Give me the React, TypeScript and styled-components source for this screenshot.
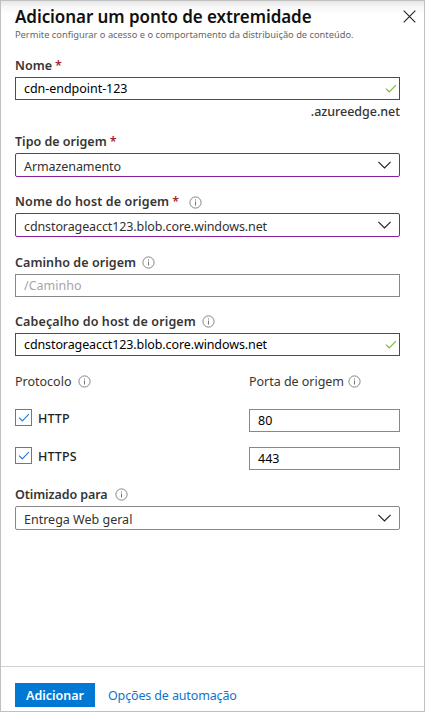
import React from 'react';
import styled, { createGlobalStyle } from 'styled-components';

const GlobalStyle = createGlobalStyle`
  * { box-sizing: border-box; }
  body { margin: 0; background: #fff; }
`;

const Panel = styled.main`
  display: flex;
  flex-direction: column;
  width: 425px;
  height: 712px;
  border: 1px solid #c0c0c0;
  background: linear-gradient(#e6e6e6, #f7f7f7 6px, #fff 13px);
  color: #363534;
  font-family: 'Noto Sans', 'Segoe UI', sans-serif;
  font-size: 12.5px;
  line-height: 20px;
`;

const Header = styled.header`
  display: flex;
  justify-content: space-between;
  height: 54px;
  padding: 4px 8px 0 14px;
`;

const Title = styled.h1`
  margin: 0;
  font-size: 17px;
  font-weight: 600;
  line-height: 24px;
  letter-spacing: -0.075px;
  color: #111;
  white-space: nowrap;
`;

const Subtitle = styled.p`
  margin: 0;
  font-size: 9.3px;
  line-height: 12px;
  color: #666;
  white-space: nowrap;
`;

const CloseButton = styled.button`
  display: flex;
  width: 13px;
  height: 13px;
  margin-top: 5px;
  padding: 0;
  border: 0;
  background: none;
`;

const Form = styled.form`
  display: flex;
  flex: 1;
  flex-direction: column;
  padding: 0 24px 0 14px;
`;

const Field = styled.div<{ $after: number }>`
  display: flex;
  flex-direction: column;
  gap: 2px;
  margin-bottom: ${(p) => p.$after}px;
`;

const Label = styled.div<{ $tracking?: number; $regular?: boolean }>`
  display: flex;
  align-items: center;
  height: 20px;
  padding-top: 2px;
  font-weight: ${(p) => (p.$regular ? 400 : 600)};
  letter-spacing: ${(p) => p.$tracking ?? 0}px;
  white-space: nowrap;
`;

const Required = styled.span`
  margin-left: 3px;
  color: #a4262c;
  letter-spacing: 0;
`;

const InfoMark = styled.svg<{ $gap?: number; $lift?: number }>`
  flex: none;
  width: 13px;
  height: 13px;
  margin-left: ${(p) => p.$gap ?? 6}px;
  margin-top: ${(p) => -(p.$lift ?? 2)}px;
`;

const Box = styled.div<{ $set?: boolean; $tracking?: number }>`
  display: flex;
  align-items: center;
  justify-content: space-between;
  height: 23px;
  padding: 0 2px 0 8px;
  border: 1px solid ${(p) => (p.$set ? '#881fa3' : '#8a8886')};
  background: #fff;
  color: #000;
  letter-spacing: ${(p) => p.$tracking ?? 0}px;
  white-space: nowrap;
`;

const Select = styled(Box)`
  height: 24px;
  padding: 3px 8px 0 8px;
  border-radius: 2px;
  color: #323130;
`;

const Arrow = styled.svg`
  width: 13px;
  height: 8px;
  margin-top: -3px;
`;

const Placeholder = styled.span`
  color: #a6a6a6;
`;

const Suffix = styled.div`
  align-self: flex-end;
  height: 18px;
  font-weight: 500;
  letter-spacing: -0.03px;
`;

const ProtocolHeads = styled.div`
  display: grid;
  grid-template-columns: 234px 151px;
  margin-bottom: 18px;
`;

const ProtocolRow = styled.div<{ $after: number }>`
  display: grid;
  grid-template-columns: 234px 151px;
  height: 23px;
  margin-bottom: ${(p) => p.$after}px;
`;

const Choice = styled.label`
  display: flex;
  align-items: center;
  align-self: start;
  height: 17px;
  gap: 6px;
  font-weight: 500;
  letter-spacing: 0.1px;
  color: #222;
`;

const Check = styled.span`
  display: flex;
  align-items: center;
  justify-content: center;
  width: 17px;
  height: 17px;
  border: 1px solid #767676;
`;

const ChoiceText = styled.span`
  padding-top: 2px;
`;

const Footer = styled.footer`
  display: flex;
  align-items: flex-start;
  height: 45px;
  padding: 16px 14px 0;
  border-top: 1px solid #d0d0d0;
`;

const Primary = styled.button`
  width: 80px;
  height: 24px;
  padding: 1px 0 0;
  border: 0;
  background: #0078d4;
  color: #fff;
  font: 600 12.5px/23px 'Noto Sans', sans-serif;
`;

const Link = styled.a`
  margin-left: 13px;
  padding-top: 1px;
  color: #0f74cc;
  line-height: 24px;
  letter-spacing: -0.14px;
`;

const Info = ({ gap, lift }: { gap?: number; lift?: number }) => (
  <InfoMark $gap={gap} $lift={lift} viewBox="0 0 13 13" fill="none" stroke="#777">
    <circle cx="6.5" cy="6.5" r="5.6" strokeWidth="0.9" />
    <path d="M6.5 5.5v4M6.5 3.4v1.1" />
  </InfoMark>
);

const Chevron = () => (
  <Arrow viewBox="0 0 13 8" fill="none" stroke="#222" strokeWidth="1.15">
    <path d="M.4 .8 6.5 6.9 12.6 .8" />
  </Arrow>
);

const Tick = ({ color }: { color: string }) => (
  <svg width="12" height="9" viewBox="0 0 12 9" fill="none" stroke={color} strokeWidth="1.2">
    <path d="M1 4.6 4.3 7.8 10.9 1.2" />
  </svg>
);

export default function App() {
  return (
    <>
      <GlobalStyle />
      <Panel>
        <Header>
          <div>
            <Title>Adicionar um ponto de extremidade</Title>
            <Subtitle>Permite configurar o acesso e o comportamento da distribuição de conteúdo.</Subtitle>
          </div>
          <CloseButton aria-label="Fechar">
            <svg width="13" height="13" viewBox="0 0 13 13" stroke="#222" strokeWidth="1.1">
              <path d="M.7.7 12.3 12.3M12.3.7.7 12.3" />
            </svg>
          </CloseButton>
        </Header>
        <Form>
          <Field $after={11}>
            <Label>Nome<Required>*</Required></Label>
            <Box $set $tracking={-0.04}>cdn-endpoint-123<Tick color="#7fba42" /></Box>
            <Suffix>.azureedge.net</Suffix>
          </Field>
          <Field $after={14}>
            <Label>Tipo de origem<Required>*</Required></Label>
            <Select $set $tracking={-0.08}>Armazenamento<Chevron /></Select>
          </Field>
          <Field $after={15}>
            <Label $tracking={0.13}>Nome do host de origem<Required>*</Required><Info gap={9.5} lift={0} /></Label>
            <Select $set $tracking={-0.105}>cdnstorageacct123.blob.core.windows.net<Chevron /></Select>
          </Field>
          <Field $after={14}>
            <Label $tracking={0.07}>Caminho de origem<Info /></Label>
            <Box><Placeholder>/Caminho</Placeholder></Box>
          </Field>
          <Field $after={15}>
            <Label $tracking={0.12}>Cabeçalho do host de origem<Info /></Label>
            <Box $set $tracking={-0.105}>cdnstorageacct123.blob.core.windows.net<Tick color="#7fba42" /></Box>
          </Field>
          <ProtocolHeads>
            <Label $regular>Protocolo<Info gap={6.5} /></Label>
            <Label $regular $tracking={-0.03}>Porta de origem<Info gap={4} /></Label>
          </ProtocolHeads>
          <ProtocolRow $after={15}>
            <Choice><Check><Tick color="#2b7de0" /></Check><ChoiceText>HTTP</ChoiceText></Choice>
            <Box>80</Box>
          </ProtocolRow>
          <ProtocolRow $after={14}>
            <Choice><Check><Tick color="#2b7de0" /></Check><ChoiceText>HTTPS</ChoiceText></Choice>
            <Box>443</Box>
          </ProtocolRow>
          <Field $after={0}>
            <Label $tracking={-0.09}>Otimizado para<Info gap={7} /></Label>
            <Select>Entrega Web geral<Chevron /></Select>
          </Field>
        </Form>
        <Footer>
          <Primary>Adicionar</Primary>
          <Link>Opções de automação</Link>
        </Footer>
      </Panel>
    </>
  );
}
